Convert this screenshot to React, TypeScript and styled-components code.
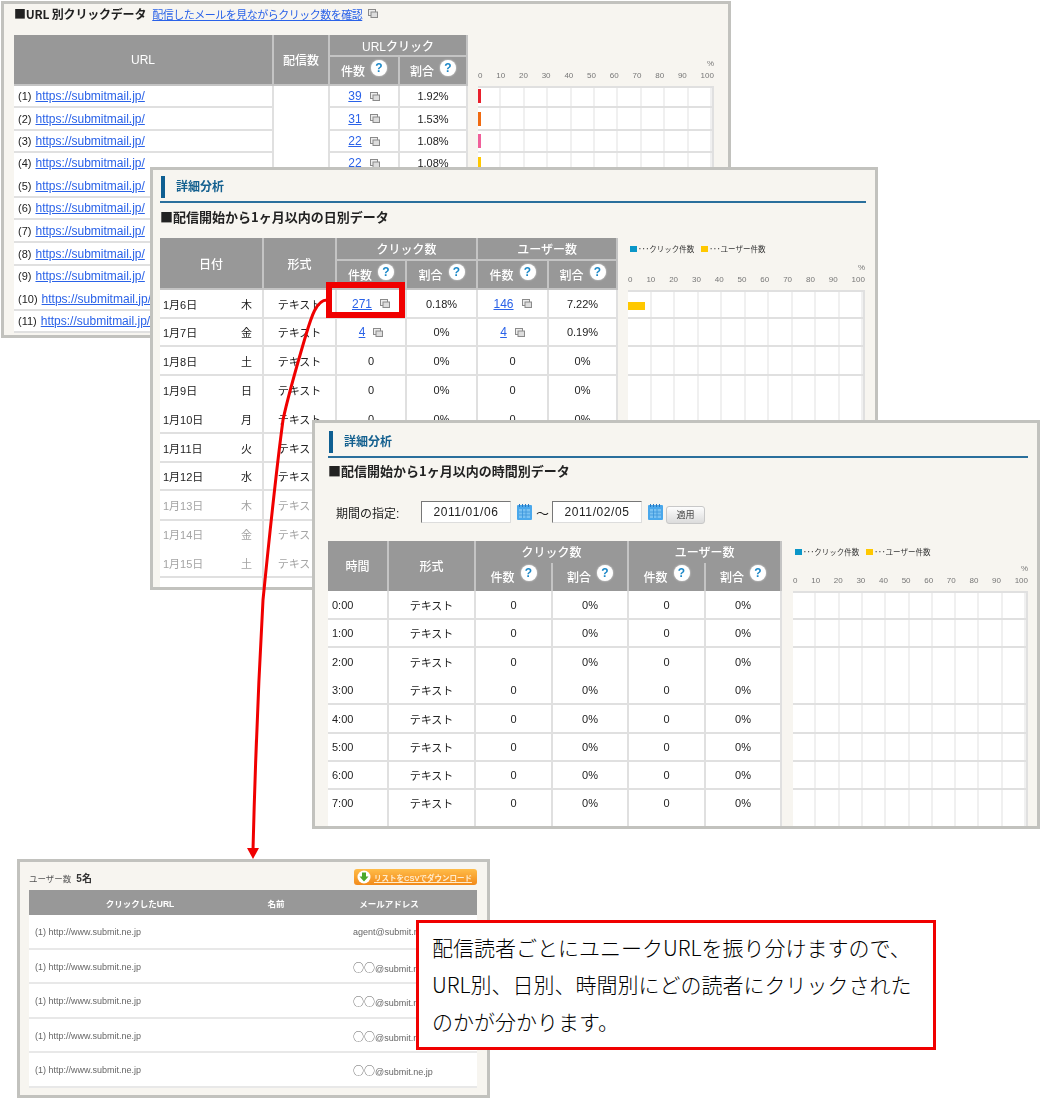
import React from 'react';
import styled, { createGlobalStyle } from 'styled-components';

const FONT = `"Liberation Sans", "Noto Sans CJK JP", sans-serif`;
const CJK_FONT = `"Noto Sans CJK JP", sans-serif`;

const GlobalStyle = createGlobalStyle`
  html, body {
    margin: 0;
    background: #fff;
    font-family: ${FONT};
    color: #222;
  }
`;

const Canvas = styled.div`
  position: relative;
  width: 1042px;
  height: 1098px;
  overflow: hidden;
  background: #fff;
`;

// the screenshots overlap each other, so each one sits at its own spot on the canvas
const Panel = styled.section<{ $x: number; $y: number; $w: number; $h: number; $pad: string }>`
  position: absolute;
  left: ${({ $x }) => $x}px;
  top: ${({ $y }) => $y}px;
  width: ${({ $w }) => $w}px;
  height: ${({ $h }) => $h}px;
  padding: ${({ $pad }) => $pad};
  box-sizing: border-box;
  overflow: hidden;
  background: #f7f5f0;
  border: 3px solid #c2c2be;
  filter: blur(0.45px);
`;

const TitleRow = styled.div`
  display: flex;
  align-items: center;
  gap: 6px;
  height: 19px;
  margin-bottom: 12px;
`;

const TitleText = styled.strong`
  font-family: ${CJK_FONT};
  font-size: 12px;
  letter-spacing: -0.2px;
  white-space: nowrap;
`;

const SubTitle = styled.h3<{ $top: number; $bottom: number }>`
  margin: ${({ $top }) => $top}px 0 ${({ $bottom }) => $bottom}px;
  height: 20px;
  line-height: 18px;
  font-family: ${CJK_FONT};
  font-size: 13px;
  font-weight: 700;
  white-space: nowrap;
  color: #222;
`;

const TopLink = styled.a`
  font-size: 11px;
  letter-spacing: -0.5px;
  color: #2a62e8;
  text-decoration: underline;
`;

const Heading = styled.div`
  padding-bottom: 3px;
  border-bottom: 2px solid #2a6f9c;
`;

const HeadingText = styled.h2`
  margin: 0 0 0 1px;
  height: 22px;
  line-height: 22px;
  padding-left: 11px;
  border-left: 4px solid #0f5f92;
  font-size: 12px;
  font-weight: 700;
  color: #14608f;
`;

const Split = styled.div<{ $gap: number }>`
  display: flex;
  align-items: flex-start;
  gap: ${({ $gap }) => $gap}px;
`;

const Table = styled.table<{ $w: number }>`
  width: ${({ $w }) => $w}px;
  flex: none;
  table-layout: fixed;
  border-collapse: separate;
  border-spacing: 0;
  background: #fff;
  font-size: 11px;
`;

const Col = styled.col<{ $w: number }>`
  width: ${({ $w }) => $w}px;
`;

const Th = styled.th<{ $flat?: boolean }>`
  padding: 0 0 ${({ $flat }) => ($flat ? '2px' : '0')};
  background: #989898;
  color: #fff;
  font-size: 12px;
  font-weight: 500;
  text-align: center;
  vertical-align: middle;
  border-right: 2px solid #c4c4c4;
  border-bottom: ${({ $flat }) => ($flat ? '0' : '2px solid #c4c4c4')};
  box-sizing: border-box;
`;

const HeadRow = styled.tr<{ $h: number }>`
  height: ${({ $h }) => $h}px;
`;

const HeadLabel = styled.span`
  display: inline-flex;
  align-items: center;
  gap: 6px;
`;

const Help = styled.span`
  display: inline-block;
  width: 16px;
  height: 16px;
  line-height: 16px;
  border-radius: 50%;
  background: #fff;
  box-shadow: 0 0 2px rgba(255, 255, 255, 0.8);
  color: #1c88c8;
  font-size: 12px;
  font-weight: 700;
  text-align: center;
  transform: translateY(-3px);
`;

const BodyRow = styled.tr<{ $h: number; $line: boolean; $muted?: boolean }>`
  height: ${({ $h }) => $h}px;
  color: ${({ $muted }) => ($muted ? '#a4a4a4' : '#222')};
  & > td {
    box-shadow: ${({ $line }) => ($line ? 'inset 0 -2px 0 #e0e0e0' : 'none')};
  }
`;

const Td = styled.td<{ $left?: boolean }>`
  padding: ${({ $left }) => ($left ? '0 0 2px 4px' : '0 0 2px')};
  box-sizing: border-box;
  text-align: ${({ $left }) => ($left ? 'left' : 'center')};
  vertical-align: middle;
  white-space: nowrap;
  border-right: 2px solid #e0e0e0;
`;

const SpanCell = styled.td`
  padding: 0;
  border-right: 2px solid #e0e0e0;
`;

const DateCell = styled.div`
  display: flex;
  justify-content: space-between;
  padding: 0 10px 0 3px;
`;

const TableLink = styled.a`
  font-size: 12px;
  color: #2a62e8;
  text-decoration: underline;
`;

const LinkGroup = styled.span`
  display: inline-flex;
  align-items: center;
  gap: 8px;
`;

const UrlIndex = styled.span`
  margin-right: 4px;
`;

const ChartColumn = styled.div<{ $w: number }>`
  width: ${({ $w }) => $w}px;
  flex: none;
`;

const ChartHead = styled.div<{ $h: number }>`
  height: ${({ $h }) => $h}px;
  display: flex;
  flex-direction: column;
  justify-content: flex-end;
  padding-bottom: 5px;
  box-sizing: border-box;
  color: #777;
  font-size: 8px;
`;

const Legend = styled.div`
  display: flex;
  align-items: center;
  gap: 7px;
  margin: 5px 0 auto 2px;
  font-size: 7.5px;
  color: #333;
  white-space: nowrap;
`;

const LegendItem = styled.span`
  display: inline-flex;
  align-items: center;
  gap: 1px;
`;

const Swatch = styled.i<{ $color: string }>`
  display: inline-block;
  width: 7px;
  height: 6px;
  background: ${({ $color }) => $color};
`;

const Unit = styled.div`
  text-align: right;
  line-height: 10px;
`;

const Axis = styled.div`
  display: flex;
  justify-content: space-between;
  line-height: 11px;
  margin-top: 1px;
`;

const ChartBody = styled.div`
  background-color: #fff;
  background-image: repeating-linear-gradient(
    to right,
    transparent 0,
    transparent calc(10% - 2px),
    #f0f0f0 calc(10% - 2px),
    #f0f0f0 10%
  );
  border-right: 2px solid #e0e0e0;
  box-shadow: inset 0 2px 0 #e0e0e0;
  box-sizing: border-box;
`;

const ChartRow = styled.div<{ $h: number; $line: boolean }>`
  height: ${({ $h }) => $h}px;
  display: flex;
  align-items: center;
  box-sizing: border-box;
  border-bottom: ${({ $line }) => ($line ? '2px solid #e0e0e0' : '0')};
`;

const Bar = styled.i<{ $color: string; $w: number; $h: number; $drop: number }>`
  display: block;
  width: ${({ $w }) => $w}px;
  height: ${({ $h }) => $h}px;
  margin-top: ${({ $drop }) => $drop}px;
  background: ${({ $color }) => $color};
`;

const PeriodRow = styled.div`
  display: flex;
  align-items: center;
  height: 24px;
  margin: 18px 0 17px;
  padding-left: 8px;
  font-size: 12px;
`;

const PeriodLabel = styled.span`
  width: 85px;
  flex: none;
`;

const DateField = styled.div`
  width: 90px;
  height: 22px;
  flex: none;
  box-sizing: border-box;
  line-height: 20px;
  text-align: center;
  background: #fff;
  border: 1px solid #ddd;
  border-top-color: #777;
  border-left-color: #777;
  letter-spacing: 0.6px;
`;

const Tilde = styled.span`
  margin: 0 3px 0 4px;
  font-size: 13px;
`;

const CalendarWrap = styled.span`
  display: inline-flex;
  margin-left: 6px;
`;

const ApplyButton = styled.button`
  width: 39px;
  height: 18px;
  padding: 0;
  margin: 5px 0 0 3px;
  border: 1px solid #c8c8c8;
  border-radius: 3px;
  background: linear-gradient(#fdfdfd, #dcdcdc);
  color: #444;
  font-family: ${FONT};
  font-size: 9px;
`;

const UserBar = styled.div`
  display: flex;
  align-items: center;
  justify-content: space-between;
  height: 20px;
  margin-bottom: 3px;
  font-size: 8.5px;
  color: #555;
`;

const UserCount = styled.strong`
  margin-left: 5px;
  color: #333;
  font-size: 10px;
`;

const CsvButton = styled.a`
  display: inline-flex;
  align-items: center;
  gap: 3px;
  width: 123px;
  height: 16px;
  padding-left: 3px;
  box-sizing: border-box;
  border-radius: 3px;
  background: linear-gradient(#ffbc48, #f28a1a);
  color: #ffeccc;
  font-size: 7.5px;
  font-weight: 700;
  white-space: nowrap;
`;

const CsvIconWrap = styled.span`
  display: inline-flex;
  flex: none;
`;

const UserTable = styled.table`
  width: 448px;
  table-layout: fixed;
  border-collapse: separate;
  border-spacing: 0;
  background: #fff;
  font-size: 9px;
  color: #666;
`;

const UserTh = styled.th`
  height: 25px;
  padding: 0;
  background: #989898;
  color: #fff;
  font-size: 8.5px;
  font-weight: 700;
`;

const UserRow = styled.tr<{ $h: number }>`
  height: ${({ $h }) => $h}px;
`;

const UserTd = styled.td<{ $indent: number }>`
  padding: 1px 0 0 ${({ $indent }) => $indent}px;
  box-sizing: border-box;
  border-bottom: 2px solid #e8e8e8;
  white-space: nowrap;
`;

const Maru = styled.span`
  font-family: ${CJK_FONT};
  font-size: 11px;
`;

const Callout = styled.div`
  position: absolute;
  left: 416px;
  top: 920px;
  width: 520px;
  height: 130px;
  box-sizing: border-box;
  padding: 6px 13px;
  background: #fff;
  border: 3px solid #f00000;
  font-family: ${CJK_FONT};
  font-size: 21px;
  font-weight: 300;
  line-height: 37px;
  color: #000;
  white-space: nowrap;
`;

const RedBox = styled.div`
  position: absolute;
  left: 326px;
  top: 282px;
  width: 79px;
  height: 36px;
  box-sizing: border-box;
  border: 6px solid #f00000;
`;

const ArrowLayer = styled.svg`
  position: absolute;
  left: 0;
  top: 0;
  pointer-events: none;
`;

const CopyIcon = () => (
  <svg width="10" height="9" viewBox="0 0 10 9">
    <rect x="0.5" y="0.5" width="7" height="6" fill="#eee" stroke="#8a8a8a" />
    <rect x="3" y="3" width="6.5" height="5.5" fill="#ddd" stroke="#8a8a8a" />
  </svg>
);

const CalendarIcon = () => (
  <svg width="15" height="16" viewBox="0 0 15 16">
    <rect x="0" y="1" width="15" height="15" rx="1" fill="#4aa8ec" />
    <rect x="2" y="5" width="11" height="9" fill="#7ac2f2" />
    <path d="M2 8h11M2 11h11M5.5 5v9M9 5v9" stroke="#3a94da" strokeWidth="0.8" />
    <path d="M2.5 0v3M5.5 0v3M8.5 0v3M11.5 0v3" stroke="#2a78c0" />
  </svg>
);

const DownloadIcon = () => (
  <svg width="14" height="14" viewBox="0 0 14 14">
    <circle cx="7" cy="7" r="6.5" fill="#fff" />
    <path d="M5 2.5h4v4h2.5L7 11.5 2.5 6.5H5z" fill="#4aa82a" />
  </svg>
);

type RowSpec = { h: number; line: boolean };

const TICKS = [0, 10, 20, 30, 40, 50, 60, 70, 80, 90, 100];

interface BarSpec {
  color: string;
  w: number;
  h: number;
  drop?: number;
}

interface ChartProps {
  width: number;
  headHeight: number;
  rows: RowSpec[];
  legend?: boolean;
  bars?: Record<number, BarSpec>;
}

const Chart: React.FC<ChartProps> = ({ width, headHeight, rows, legend, bars = {} }) => (
  <ChartColumn $w={width}>
    <ChartHead $h={headHeight}>
      {legend && (
        <Legend>
          <LegendItem><Swatch $color="#0a96c8" />･･･クリック件数</LegendItem>
          <LegendItem><Swatch $color="#ffc800" />･･･ユーザー件数</LegendItem>
        </Legend>
      )}
      <Unit>%</Unit>
      <Axis>{TICKS.map((t) => <span key={t}>{t}</span>)}</Axis>
    </ChartHead>
    <ChartBody>
      {rows.map((row, i) => (
        <ChartRow key={i} $h={row.h} $line={row.line}>
          {bars[i] && <Bar $color={bars[i].color} $w={bars[i].w} $h={bars[i].h} $drop={bars[i].drop ?? 0} />}
        </ChartRow>
      ))}
    </ChartBody>
  </ChartColumn>
);

const Count: React.FC<{ value: string }> = ({ value }) => (
  <LinkGroup>
    <TableLink href="#">{value}</TableLink>
    <CopyIcon />
  </LinkGroup>
);

const HeadHelp: React.FC<{ label: string }> = ({ label }) => (
  <HeadLabel>
    {label}
    <Help>?</Help>
  </HeadLabel>
);

// rows 5 and below sit behind the daily panel, so only their links show
const urlRows: (RowSpec & { n: number; count?: string; rate?: string })[] = [
  { n: 1, h: 22, line: true, count: '39', rate: '1.92%' },
  { n: 2, h: 23, line: true, count: '31', rate: '1.53%' },
  { n: 3, h: 22, line: true, count: '22', rate: '1.08%' },
  { n: 4, h: 22, line: false, count: '22', rate: '1.08%' },
  { n: 5, h: 23, line: true },
  { n: 6, h: 22, line: true },
  { n: 7, h: 23, line: true },
  { n: 8, h: 23, line: true },
  { n: 9, h: 22, line: false },
  { n: 10, h: 23, line: true },
  { n: 11, h: 22, line: true },
];

// from 1月11日 on, the count columns sit behind the hourly panel
const dayRows: (RowSpec & {
  date?: string;
  week?: string;
  clicks?: React.ReactNode;
  clickRate?: string;
  users?: React.ReactNode;
  userRate?: string;
  muted?: boolean;
})[] = [
  { h: 29, line: true, date: '1月6日', week: '木', clicks: <Count value="271" />, clickRate: '0.18%', users: <Count value="146" />, userRate: '7.22%' },
  { h: 28, line: true, date: '1月7日', week: '金', clicks: <Count value="4" />, clickRate: '0%', users: <Count value="4" />, userRate: '0.19%' },
  { h: 29, line: true, date: '1月8日', week: '土', clicks: '0', clickRate: '0%', users: '0', userRate: '0%' },
  { h: 29, line: false, date: '1月9日', week: '日', clicks: '0', clickRate: '0%', users: '0', userRate: '0%' },
  { h: 29, line: true, date: '1月10日', week: '月', clicks: '0', clickRate: '0%', users: '0', userRate: '0%' },
  { h: 29, line: true, date: '1月11日', week: '火' },
  { h: 28, line: true, date: '1月12日', week: '水' },
  { h: 30, line: true, date: '1月13日', week: '木', muted: true },
  { h: 28, line: false, date: '1月14日', week: '金', muted: true },
  { h: 29, line: true, date: '1月15日', week: '土', muted: true },
  { h: 10, line: false },
];

const hourRows: (RowSpec & { time?: string })[] = [
  { h: 29, line: true, time: '0:00' },
  { h: 28, line: true, time: '1:00' },
  { h: 29, line: false, time: '2:00' },
  { h: 28, line: true, time: '3:00' },
  { h: 29, line: true, time: '4:00' },
  { h: 28, line: true, time: '5:00' },
  { h: 28, line: true, time: '6:00' },
  { h: 28, line: false, time: '7:00' },
  { h: 10, line: false },
];

const userRows: { h: number; email: React.ReactNode }[] = [
  { h: 35, email: 'agent@submit.ne.jp' },
  { h: 34, email: <><Maru>○○</Maru>@submit.ne.jp</> },
  { h: 35, email: <><Maru>○○</Maru>@submit.ne.jp</> },
  { h: 34, email: <><Maru>○○</Maru>@submit.ne.jp</> },
  { h: 35, email: <><Maru>○○</Maru>@submit.ne.jp</> },
];

const App: React.FC = () => (
  <Canvas>
    <GlobalStyle />

    <Panel $x={1} $y={1} $w={730} $h={337} $pad="0 10px">
      <TitleRow>
        <TitleText>■URL 別クリックデータ</TitleText>
        <TopLink href="#">配信したメールを見ながらクリック数を確認</TopLink>
        <CopyIcon />
      </TitleRow>
      <Split $gap={10}>
        <Table $w={454}>
          <colgroup>
            <Col $w={260} />
            <Col $w={56} />
            <Col $w={70} />
            <Col $w={68} />
          </colgroup>
          <thead>
            <HeadRow $h={22}>
              <Th rowSpan={2}>URL</Th>
              <Th rowSpan={2}>配信数</Th>
              <Th colSpan={2}>URLクリック</Th>
            </HeadRow>
            <HeadRow $h={29}>
              <Th><HeadHelp label="件数" /></Th>
              <Th><HeadHelp label="割合" /></Th>
            </HeadRow>
          </thead>
          <tbody>
            {urlRows.map((row, i) => (
              <BodyRow key={row.n} $h={row.h} $line={row.line}>
                <Td $left>
                  <UrlIndex>({row.n})</UrlIndex>
                  <TableLink href="#">https://submitmail.jp/</TableLink>
                </Td>
                {i === 0 && <SpanCell rowSpan={urlRows.length} />}
                <Td>{row.count && <Count value={row.count} />}</Td>
                <Td>{row.rate}</Td>
              </BodyRow>
            ))}
          </tbody>
        </Table>
        <Chart
          width={236}
          headHeight={51}
          rows={urlRows}
          bars={{
            0: { color: '#e8202c', w: 3, h: 14 },
            1: { color: '#f06a10', w: 3, h: 14 },
            2: { color: '#f0609a', w: 3, h: 14 },
            3: { color: '#ffc800', w: 3, h: 14 },
          }}
        />
      </Split>
    </Panel>

    <Panel $x={150} $y={167} $w={728} $h={423} $pad="6px 9px 0 7px">
      <Heading><HeadingText>詳細分析</HeadingText></Heading>
      <SubTitle $top={5} $bottom={10}>■配信開始から1ヶ月以内の日別データ</SubTitle>
      <Split $gap={10}>
        <Table $w={458}>
          <colgroup>
            <Col $w={104} />
            <Col $w={73} />
            <Col $w={70} />
            <Col $w={71} />
            <Col $w={71} />
            <Col $w={69} />
          </colgroup>
          <thead>
            <HeadRow $h={23}>
              <Th rowSpan={2}>日付</Th>
              <Th rowSpan={2}>形式</Th>
              <Th colSpan={2}>クリック数</Th>
              <Th colSpan={2}>ユーザー数</Th>
            </HeadRow>
            <HeadRow $h={29}>
              <Th><HeadHelp label="件数" /></Th>
              <Th><HeadHelp label="割合" /></Th>
              <Th><HeadHelp label="件数" /></Th>
              <Th><HeadHelp label="割合" /></Th>
            </HeadRow>
          </thead>
          <tbody>
            {dayRows.map((row, i) => (
              <BodyRow key={i} $h={row.h} $line={row.line} $muted={row.muted}>
                <Td>
                  {row.date && (
                    <DateCell>
                      <span>{row.date}</span>
                      <span>{row.week}</span>
                    </DateCell>
                  )}
                </Td>
                <Td>{row.date && 'テキスト'}</Td>
                <Td>{row.clicks}</Td>
                <Td>{row.clickRate}</Td>
                <Td>{row.users}</Td>
                <Td>{row.userRate}</Td>
              </BodyRow>
            ))}
          </tbody>
        </Table>
        <Chart
          width={237}
          headHeight={52}
          rows={dayRows}
          legend
          bars={{ 0: { color: '#ffc800', w: 17, h: 8, drop: 5 } }}
        />
      </Split>
    </Panel>

    <Panel $x={312} $y={420} $w={728} $h={409} $pad="8px 9px 0 13px">
      <Heading><HeadingText>詳細分析</HeadingText></Heading>
      <SubTitle $top={4} $bottom={0}>■配信開始から1ヶ月以内の時間別データ</SubTitle>
      <PeriodRow>
        <PeriodLabel>期間の指定:</PeriodLabel>
        <DateField>2011/01/06</DateField>
        <CalendarWrap><CalendarIcon /></CalendarWrap>
        <Tilde>〜</Tilde>
        <DateField>2011/02/05</DateField>
        <CalendarWrap><CalendarIcon /></CalendarWrap>
        <ApplyButton>適用</ApplyButton>
      </PeriodRow>
      <Split $gap={11}>
        <Table $w={454}>
          <colgroup>
            <Col $w={61} />
            <Col $w={87} />
            <Col $w={77} />
            <Col $w={76} />
            <Col $w={77} />
            <Col $w={76} />
          </colgroup>
          <thead>
            <HeadRow $h={22}>
              <Th rowSpan={2} $flat>時間</Th>
              <Th rowSpan={2} $flat>形式</Th>
              <Th colSpan={2} $flat>クリック数</Th>
              <Th colSpan={2} $flat>ユーザー数</Th>
            </HeadRow>
            <HeadRow $h={28}>
              <Th $flat><HeadHelp label="件数" /></Th>
              <Th $flat><HeadHelp label="割合" /></Th>
              <Th $flat><HeadHelp label="件数" /></Th>
              <Th $flat><HeadHelp label="割合" /></Th>
            </HeadRow>
          </thead>
          <tbody>
            {hourRows.map((row, i) => (
              <BodyRow key={i} $h={row.h} $line={row.line}>
                <Td $left>{row.time}</Td>
                <Td>{row.time && 'テキスト'}</Td>
                <Td>{row.time && '0'}</Td>
                <Td>{row.time && '0%'}</Td>
                <Td>{row.time && '0'}</Td>
                <Td>{row.time && '0%'}</Td>
              </BodyRow>
            ))}
          </tbody>
        </Table>
        <Chart width={235} headHeight={50} rows={hourRows} legend />
      </Split>
    </Panel>

    <Panel $x={17} $y={859} $w={473} $h={239} $pad="5px 10px 0 9px">
      <UserBar>
        <span>ユーザー数<UserCount>5名</UserCount></span>
        <CsvButton href="#">
          <CsvIconWrap><DownloadIcon /></CsvIconWrap>
          リストをCSVでダウンロード
        </CsvButton>
      </UserBar>
      <UserTable>
        <colgroup>
          <Col $w={222} />
          <Col $w={50} />
          <Col $w={176} />
        </colgroup>
        <thead>
          <tr>
            <UserTh>クリックしたURL</UserTh>
            <UserTh>名前</UserTh>
            <UserTh>メールアドレス</UserTh>
          </tr>
        </thead>
        <tbody>
          {userRows.map((row, i) => (
            <UserRow key={i} $h={row.h}>
              <UserTd $indent={6}>(1) http://www.submit.ne.jp</UserTd>
              <UserTd $indent={0} />
              <UserTd $indent={52}>{row.email}</UserTd>
            </UserRow>
          ))}
        </tbody>
      </UserTable>
    </Panel>

    <RedBox />

    <ArrowLayer width="1042" height="1098" viewBox="0 0 1042 1098">
      <path
        d="M327 300C316 300 311 318 305 338C295 372 288 396 283 420C275 480 268 550 263 600C258 690 255 770 253 850"
        fill="none"
        stroke="#f00000"
        strokeWidth="3"
      />
      <path d="M247 848h12l-6 11z" fill="#f00000" />
    </ArrowLayer>

    <Callout>
      <div>配信読者ごとにユニークURLを振り分けますので、</div>
      <div>URL別、日別、時間別にどの読者にクリックされた</div>
      <div>のかが分かります。</div>
    </Callout>
  </Canvas>
);

export default App;
